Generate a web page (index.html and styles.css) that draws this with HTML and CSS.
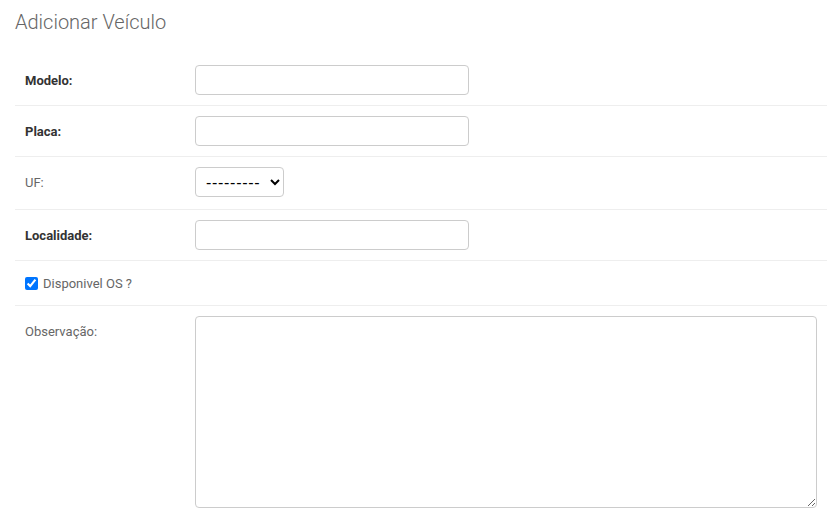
FILE: index.html
```html
<!DOCTYPE html>
<html lang="pt">
<head>
<meta charset="utf-8">
<title>Adicionar Veículo</title>
<link rel="stylesheet" href="styles.css">
</head>
<body>
<div class="content">
  <h1 class="title">Adicionar Veículo</h1>
  <form class="form">
    <div class="form-row">
      <label class="label required" for="modelo">Modelo:</label>
      <input class="text-input" type="text" id="modelo">
    </div>
    <div class="form-row">
      <label class="label required" for="placa">Placa:</label>
      <input class="text-input" type="text" id="placa">
    </div>
    <div class="form-row row-select">
      <label class="label" for="uf">UF:</label>
      <select class="select" id="uf">
        <option>---------</option>
      </select>
    </div>
    <div class="form-row">
      <label class="label required" for="localidade">Localidade:</label>
      <input class="text-input" type="text" id="localidade">
    </div>
    <div class="form-row row-check">
      <input class="checkbox" type="checkbox" id="disponivel" checked>
      <label class="check-label" for="disponivel">Disponivel OS ?</label>
    </div>
    <div class="form-row">
      <label class="label" for="obs">Observação:</label>
      <textarea class="textarea" id="obs"></textarea>
    </div>
  </form>
</div>
</body>
</html>
```
FILE: styles.css
```css
html, body {
  margin: 0;
  padding: 0;
  background: #fff;
}
body {
  font-family: Roboto, "Liberation Sans", Arial, sans-serif;
  font-size: 13px;
  color: #333;
}
.content {
  padding: 0 0 0 15px;
}
.title {
  margin: 10px 0 21px;
  font-size: 20px;
  line-height: 24px;
  font-weight: 300;
  color: #666;
}
.form {
  margin: 0;
}
.form-row {
  display: flex;
  align-items: flex-start;
  padding: 10px;
  border-bottom: 1px solid #eee;
}
.label {
  width: 160px;
  padding: 8px 10px 0 0;
  line-height: 15px;
  color: #666;
  flex: none;
}
.label.required {
  color: #333;
  font-weight: 700;
}
.text-input {
  box-sizing: border-box;
  width: 274px;
  height: 30px;
  margin: 0;
  padding: 5px 6px;
  border: 1px solid #ccc;
  border-radius: 4px;
  font: inherit;
  background: #fff;
}
.row-select {
  padding-bottom: 12px;
}
.select {
  box-sizing: border-box;
  width: 89px;
  height: 30px;
  margin: 0;
  padding: 0 4px 0 6px;
  border: 1px solid #ccc;
  border-radius: 4px;
  font-family: "Liberation Sans", Arial, sans-serif;
  font-size: 16px;
  letter-spacing: 0.7px;
  color: #000;
  background: #fff;
}
.row-check {
  align-items: center;
  height: 24px;
}
.checkbox {
  margin: 0 5px 0 0;
  width: 13px;
  height: 13px;
}
.check-label {
  color: #666;
  line-height: 15px;
}
.textarea {
  box-sizing: border-box;
  width: 624px;
  height: 192px;
  margin: 0;
  padding: 5px 6px;
  border: 1px solid #ccc;
  border-radius: 4px;
  font: inherit;
  background: #fff;
}
```
